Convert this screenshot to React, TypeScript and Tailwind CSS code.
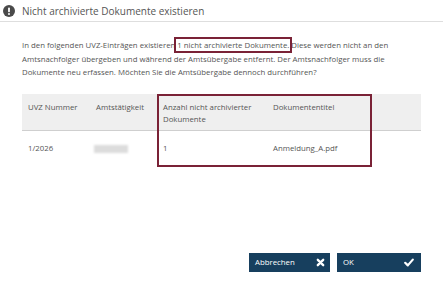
import React from "react";

export default function App() {
  return (
    <div
      className="relative w-[443px] h-[292px] bg-white overflow-hidden flex flex-col text-[#555]"
      style={{ fontFamily: '"Open Sans", sans-serif' }}
    >
      <div className="h-[22px] flex items-center pl-[3px] border-b border-[#dedede] shrink-0">
        <svg width="12" height="12" viewBox="0 0 16 16" className="shrink-0">
          <circle cx="8" cy="8" r="8" fill="#4a4a4a" />
          <rect x="6.8" y="3.2" width="2.4" height="6.4" rx="1" fill="#fff" />
          <circle cx="8" cy="12" r="1.3" fill="#fff" />
        </svg>
        <span className="ml-[7px] text-[10px] leading-none text-[#555]">
          Nicht archivierte Dokumente existieren
        </span>
      </div>

      <div className="px-[22px] flex-1 flex flex-col">
        <p className="mt-[17px] text-[7.8px] leading-[13.5px] text-[#555]">
          In den folgenden UVZ-Einträgen existieren{" "}
          <span className="outline-2 outline-[#7a2236] outline-offset-[1px]">
            1 nicht archivierte Dokumente.
          </span>{" "}
          Diese werden nicht an den Amtsnachfolger übergeben und während der
          Amtsübergabe entfernt. Der Amtsnachfolger muss die Dokumente neu
          erfassen. Möchten Sie die Amtsübergabe dennoch durchführen?
        </p>

        <div className="relative mt-[14px] text-[7.8px] leading-[12.5px] text-[#555]">
          <div className="grid grid-cols-[68px_67px_110px_1fr] bg-[#efefef] border-b border-[#cfcfcf] h-[37px]">
            <div className="pl-[6px] pt-[7px]">UVZ Nummer</div>
            <div className="pl-[6px] pt-[7px]">Amtstätigkeit</div>
            <div className="pl-[6px] pt-[7px]">
              Anzahl nicht archivierter
              <br />
              Dokumente
            </div>
            <div className="pl-[6px] pt-[7px]">Dokumententitel</div>
          </div>
          <div className="grid grid-cols-[68px_67px_110px_1fr] h-[36px] items-center">
            <div className="pl-[6px]">1/2026</div>
            <div className="pl-[4px]">
              <div className="w-[34px] h-[8px] bg-[#dcdcdc] blur-[1px]" />
            </div>
            <div className="pl-[6px]">1</div>
            <div className="pl-[6px]">Anmeldung_A.pdf</div>
          </div>
          <div className="absolute left-[135px] top-0 w-[215px] h-[73px] border-2 border-[#7a2236]" />
        </div>

        <div className="flex-1" />

        <div className="flex justify-end gap-[7px] mb-[20px]">
          <button className="w-[81px] h-[19px] bg-[#173f5e] text-white text-[7.8px] flex items-center justify-between pl-[6px] pr-[5px]">
            <span>Abbrechen</span>
            <svg width="9" height="9" viewBox="0 0 10 10">
              <path d="M2 2 L8 8 M8 2 L2 8" stroke="#fff" strokeWidth="2.6" strokeLinecap="round" />
            </svg>
          </button>
          <button className="w-[84px] h-[19px] bg-[#173f5e] text-white text-[7.8px] flex items-center justify-between pl-[6px] pr-[7px]">
            <span>OK</span>
            <svg width="10" height="9" viewBox="0 0 10 9">
              <path d="M1.2 4.8 L3.8 7.4 L8.8 1.6" stroke="#fff" strokeWidth="2.2" fill="none" strokeLinecap="round" strokeLinejoin="round" />
            </svg>
          </button>
        </div>
      </div>
    </div>
  );
}
